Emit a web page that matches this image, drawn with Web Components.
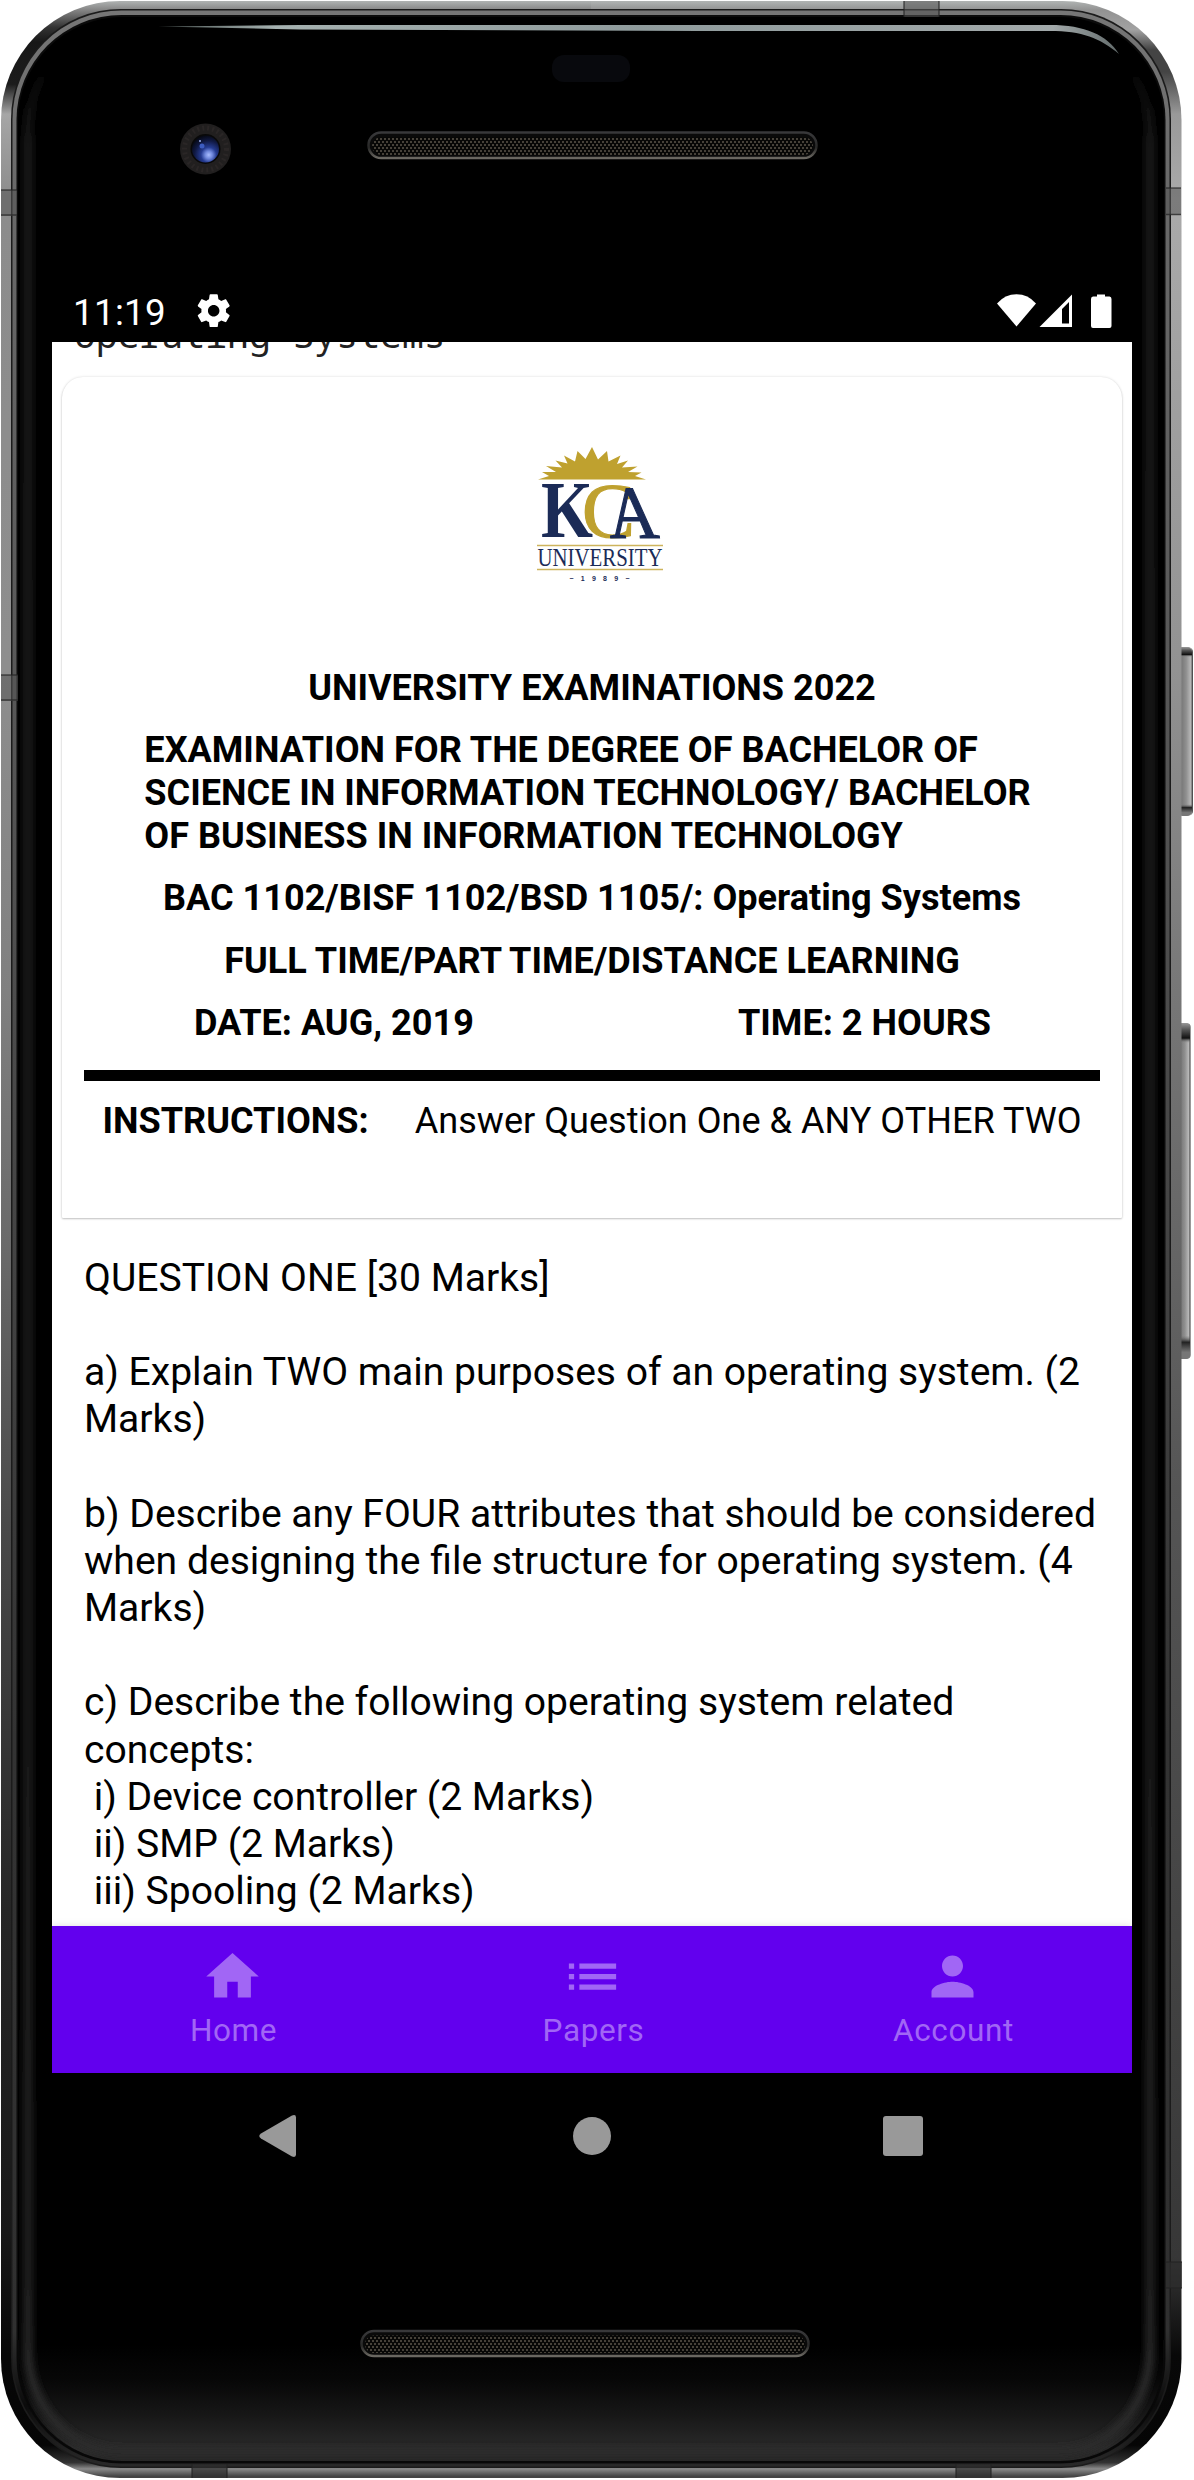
<!DOCTYPE html>
<html lang="en">
<head>
<meta charset="utf-8">
<title>Operating Systems</title>
<style>
html,body{margin:0;padding:0;background:#fff}
body{width:1194px;height:2480px;overflow:hidden}
</style>
</head>
<body>
<phone-frame>
  <status-bar time="11:19"></status-bar>
  <app-screen>
    <app-title>Operating Systems</app-title>
    <exam-card></exam-card>
    <question-sheet>QUESTION ONE [30 Marks]

a) Explain TWO main purposes of an operating system. (2
Marks)

b) Describe any FOUR attributes that should be considered
when designing the file structure for operating system. (4
Marks)

c) Describe the following operating system related
concepts:
 i) Device controller (2 Marks)
 ii) SMP (2 Marks)
 iii) Spooling (2 Marks)</question-sheet>
    <tab-bar slot="tabs">
      <tab-item icon="home">Home</tab-item>
      <tab-item icon="list">Papers</tab-item>
      <tab-item icon="person">Account</tab-item>
    </tab-bar>
  </app-screen>
  <system-nav></system-nav>
</phone-frame>
<script>
const define = (name, render) => customElements.define(name, class extends HTMLElement {
  connectedCallback() {
    if (!this.shadowRoot) this.attachShadow({ mode: 'open' }).innerHTML = render(this);
  }
});

define('phone-frame', () => `
<style>
:host{display:block;position:relative;width:1194px;height:2480px;font-family:Roboto,sans-serif}
.body{position:absolute;inset:0}
.display{position:relative;display:flex;flex-direction:column;width:1080px;padding:279px 0 0 52px}
</style>
<svg class="body" width="1194" height="2480" viewBox="0 0 1194 2480">
  <defs>
    <linearGradient id="l" gradientUnits="userSpaceOnUse" x1="0" y1="0" x2="0" y2="2480">
      <stop offset="0" stop-color="#b4b8b7"/><stop offset=".004" stop-color="#858585"/><stop offset=".011" stop-color="#333"/><stop offset=".017" stop-color="#171717"/><stop offset=".034" stop-color="#1c1c1c"/><stop offset=".046" stop-color="#a6a6a6"/><stop offset=".08" stop-color="#8c8c8c"/><stop offset=".27" stop-color="#8e8e8e"/><stop offset=".4" stop-color="#808080"/><stop offset=".5" stop-color="#6a6a6a"/><stop offset=".62" stop-color="#484848"/><stop offset=".77" stop-color="#262626"/><stop offset=".9" stop-color="#181818"/><stop offset=".95" stop-color="#070707"/><stop offset=".986" stop-color="#050505"/><stop offset=".993" stop-color="#333"/><stop offset=".9955" stop-color="#8b8b8b"/><stop offset=".9985" stop-color="#444"/>
    </linearGradient>
    <linearGradient id="r" gradientUnits="userSpaceOnUse" x1="0" y1="0" x2="0" y2="2480">
      <stop offset="0" stop-color="#b4b8b7"/><stop offset=".004" stop-color="#929292"/><stop offset=".012" stop-color="#a2a2a2"/><stop offset=".02" stop-color="#444"/><stop offset=".029" stop-color="#444"/><stop offset=".046" stop-color="#999"/><stop offset=".08" stop-color="#aaa"/><stop offset=".27" stop-color="#929292"/><stop offset=".4" stop-color="#777"/><stop offset=".6" stop-color="#555"/><stop offset=".77" stop-color="#454545"/><stop offset=".91" stop-color="#373737"/><stop offset=".95" stop-color="#080808"/><stop offset=".986" stop-color="#050505"/><stop offset=".993" stop-color="#333"/><stop offset=".9955" stop-color="#8b8b8b"/><stop offset=".9985" stop-color="#444"/>
    </linearGradient>
    <linearGradient id="rim" gradientUnits="userSpaceOnUse" x1="0" y1="0" x2="0" y2="2480">
      <stop offset="0" stop-color="#777"/><stop offset=".07" stop-color="#6a6a6a"/><stop offset=".4" stop-color="#4c4c4c"/><stop offset=".7" stop-color="#333"/><stop offset=".94" stop-color="#303030"/><stop offset=".97" stop-color="#0b0b0b"/><stop offset="1" stop-color="#303030"/>
    </linearGradient>
    <linearGradient id="side" gradientUnits="userSpaceOnUse" x1="0" y1="0" x2="0" y2="2480"><stop offset=".025" stop-color="#1c1c1c" stop-opacity="0"/><stop offset=".06" stop-color="#1c1c1c"/><stop offset=".9" stop-color="#202020"/><stop offset=".96" stop-color="#2b2b2b"/></linearGradient>
    <linearGradient id="chin" x2="0" y2="1"><stop offset="0" stop-color="#000"/><stop offset=".3" stop-color="#070707"/><stop offset=".6" stop-color="#171717"/><stop offset=".88" stop-color="#2a2a2a"/><stop offset="1" stop-color="#262626"/></linearGradient>
    <linearGradient id="shine" gradientUnits="userSpaceOnUse" x1="160" y1="0" x2="1120" y2="0"><stop offset="0" stop-color="#4a5452"/><stop offset=".12" stop-color="#a5b1b0"/><stop offset=".5" stop-color="#8f9b9c"/><stop offset=".93" stop-color="#a2a9aa"/><stop offset="1" stop-color="#626b6b"/></linearGradient>
    <linearGradient id="btn"><stop offset="0" stop-color="#666"/><stop offset=".55" stop-color="#909090"/><stop offset=".85" stop-color="#b8b8b8"/><stop offset="1" stop-color="#333"/></linearGradient>
    <linearGradient id="cap" x2="0" y2="1"><stop offset="0" stop-color="#999"/><stop offset=".02" stop-color="#555"/><stop offset=".045" stop-color="#111"/><stop offset=".06" stop-color="#999" stop-opacity="0"/><stop offset=".93" stop-color="#777" stop-opacity="0"/><stop offset=".95" stop-color="#222"/><stop offset=".98" stop-color="#777"/></linearGradient>
    <linearGradient id="edge" x2="0" y2="1"><stop offset="0" stop-color="#38383a"/><stop offset=".6" stop-color="#292928"/><stop offset="1" stop-color="#6b6862"/></linearGradient>
    <pattern id="mesh" width="4" height="6" patternUnits="userSpaceOnUse"><rect width="4" height="6" fill="#070706"/><rect x="0" y="0" width="2" height="2" fill="#464139"/><rect x="2" y="3" width="2" height="2" fill="#464139"/></pattern>
    <radialGradient id="lens" cx=".62" cy=".72" r=".75"><stop offset="0" stop-color="#a9bdff"/><stop offset=".18" stop-color="#7189dd"/><stop offset=".38" stop-color="#253b91"/><stop offset=".7" stop-color="#101943"/><stop offset="1" stop-color="#05070f"/></radialGradient>
    <filter id="soft" filterUnits="userSpaceOnUse" x="0" y="0" width="1194" height="2480"><feGaussianBlur stdDeviation="3.500"/></filter>
    <clipPath id="glass"><rect x="18" y="17" width="1146" height="2445" rx="104"/></clipPath>
    <clipPath id="lh"><rect width="591" height="2480"/></clipPath>
    <clipPath id="rh"><rect x="591" width="603" height="2480"/></clipPath>
  </defs>
  <g><rect x="1178" y="647" width="15" height="169" rx="5" fill="url(#btn)"/><rect x="1178" y="647" width="14" height="169" rx="5" fill="url(#cap)"/></g>
  <g><rect x="1178" y="1023" width="12.500" height="336" rx="4" fill="url(#btn)"/><rect x="1178" y="1023" width="12" height="336" rx="4" fill="url(#cap)"/></g>
  <rect x="1" y="1" width="1180.500" height="2477" rx="119" fill="url(#l)" clip-path="url(#lh)"/>
  <rect x="1" y="1" width="1180.500" height="2477" rx="119" fill="url(#r)" clip-path="url(#rh)"/>
  <rect x="11" y="9" width="1160" height="2459" rx="110" fill="#1b1b1b"/>
  <rect x="12.500" y="10.500" width="1157" height="2456" rx="109" fill="url(#rim)"/>
  <rect x="16.500" y="15" width="1149" height="2448.500" rx="105" fill="#0b0b0b"/>
  <rect x="18" y="17" width="1146" height="2445" rx="104" fill="#000"/>
  <g clip-path="url(#glass)">
    <rect x="0" y="2345" width="1194" height="117" fill="url(#chin)"/>
    <path d="M110 34A82 98 0 0 0 28 132V2350A94 102 0 0 0 122 2452H1058A92 102 0 0 0 1150 2350V132A90 98 0 0 0 1060 34" fill="none" stroke="url(#side)" stroke-width="9" filter="url(#soft)"/>
  </g>
  <path d="M18 2340V2358A104 104 0 0 0 122 2462H1060A104 104 0 0 0 1164 2358V2340" fill="none" stroke="#080808" stroke-width="2"/>
  <g fill="#555" fill-opacity=".55"><rect x="1" y="190" width="16" height="26"/><rect x="1" y="675" width="17" height="26"/><rect x="1166" y="188" width="15" height="27"/><rect x="904" y="1" width="35" height="16"/></g>
  <g fill="#2d2d2d" fill-opacity=".7"><rect x="1166" y="2262" width="16" height="26"/><rect x="192" y="2465" width="35" height="13"/><rect x="956" y="2465" width="35" height="13"/></g>
  <path d="M1 190h16M1 215h16M1 675h17M1 700h17M1166 188h15M1166 214.500h15M904 1v16M939 1v16M1166 2262h16M1166 2288h16M192 2464v14M227 2464v14M956 2464v14M991 2464v14" stroke="#222" stroke-opacity=".7" stroke-width="1.500"/>
  <path d="M158 26.500L300 25H1050C1085 25 1107 35 1119 54C1100 38 1082 31 1050 31H700L300 29.500Z" fill="url(#shine)"/>
  <rect x="552" y="55" width="78" height="27" rx="12" fill="#08090d"/>
  <circle cx="205.500" cy="149" r="25.500" fill="#211f1f"/>
  <circle cx="205.500" cy="149" r="21" fill="none" stroke="#2a2626" stroke-width="5" stroke-dasharray="2 3"/>
  <circle cx="205.500" cy="149" r="15" fill="#090909"/>
  <circle cx="205.500" cy="149" r="13.500" fill="url(#lens)"/>
  <circle cx="202" cy="146" r="2.500" fill="#3d5cc0"/><circle cx="200" cy="141" r="1" fill="#9db0ee"/>
  <rect x="368.500" y="132.500" width="448" height="25.500" rx="12.700" fill="#0a0a0a" stroke="url(#edge)" stroke-width="2.500"/>
  <rect x="372" y="137" width="441" height="18" rx="9" fill="url(#mesh)"/>
  <rect x="361.500" y="2331" width="447" height="25" rx="12.500" fill="#0a0a0a" stroke="url(#edge)" stroke-width="2.500"/>
  <rect x="365" y="2335.500" width="440" height="17.500" rx="8.700" fill="url(#mesh)"/>
</svg>
<div class="display"><slot></slot></div>`);

define('status-bar', el => `
<style>
:host{display:flex;align-items:center;box-sizing:border-box;width:1080px;height:63px;padding:0 20px 0 21px;background:#000;color:#fff}
time{font-size:36.75px;line-height:43px;letter-spacing:.3px;padding-top:3px}
.gear{margin-left:27.500px}
.right{display:flex;align-items:center;margin-left:auto}
svg{display:block;fill:#fff}
</style>
<time>${el.getAttribute('time')}</time>
<svg class="gear" width="39.400" height="39.400" viewBox="0 0 24 24"><path d="M19.430 12.980c.04-.32.07-.64.07-.98s-.03-.66-.07-.98l2.110-1.650c.19-.15.24-.42.12-.64l-2-3.460c-.12-.22-.39-.3-.61-.22l-2.490 1c-.52-.4-1.080-.73-1.690-.98l-.38-2.650C14.460 2.180 14.250 2 14 2h-4c-.25 0-.46.18-.49.42l-.38 2.650c-.61.25-1.170.59-1.690.98l-2.490-1c-.23-.09-.49 0-.61.22l-2 3.460c-.13.22-.07.49.12.64l2.110 1.650c-.04.32-.07.65-.07.98s.03.66.07.98l-2.110 1.650c-.19.15-.24.42-.12.64l2 3.460c.12.22.39.3.61.22l2.490-1c.52.4 1.080.73 1.690.98l.38 2.650c.03.24.24.42.49.42h4c.25 0 .46-.18.49-.42l.38-2.650c.61-.25 1.170-.59 1.690-.98l2.490 1c.23.09.49 0 .61-.22l2-3.460c.12-.22.07-.49-.12-.64l-2.110-1.650zM12 15.500c-1.930 0-3.500-1.570-3.500-3.500s1.570-3.500 3.500-3.500 3.500 1.570 3.500 3.500-1.570 3.500-3.500 3.500z"/></svg>
<div class="right">
<svg width="116" height="36" viewBox="996 292 116 36"><path d="M1016.500 325.500L997 302.500Q1005 293.300 1016.500 293.300T1036 302.500Z"/><path fill-rule="evenodd" d="M1039.500 326L1072 293.500V326ZM1062 308V322.500H1069V301Z"/><path d="M1097 295.500V293.500H1105V295.500H1109.500Q1111.500 295.500 1111.500 298V325Q1111.500 327 1109.500 327H1093Q1091 327 1091 325V298Q1091 295.500 1093 295.500Z"/></svg>
</div>`);

define('app-screen', () => `
<style>
:host{display:flex;flex-direction:column;width:1080px;height:1731px;background:#fff;overflow:hidden}
main{flex:1;min-height:0;overflow:hidden;display:flex;flex-direction:column}
</style>
<main><slot></slot></main><slot name="tabs"></slot>`);

define('app-title', () => `
<style>
:host{display:block;flex:none;margin:-29px 0 20.500px 22px;height:43px;white-space:nowrap;font:36.450px/43px "Noto Sans Mono","Roboto Mono",monospace;color:#222}
</style><slot></slot>`);

define('uni-logo', () => `
<style>:host{display:block;width:128px;height:138px;font-weight:400}svg{display:block;overflow:visible}</style>
<svg width="128" height="138" viewBox="536 446 128 138">
  <path fill="#bfa12f" d="M538 479.500L549 476L542 472L556 472L546 466L562 467.500L555.500 460.500L567.500 463.500L564 455.500L575 461.500L577.500 451L585.500 459L592 447L598 459.500L607 451L608.500 461.500L620.500 455.500L617 464L628 460.500L622 467.500L637.500 466.500L628 472L641.500 472.500L635 476L646 479.500Z"/>
  <g font-family="Liberation Serif,serif">
    <text x="541" y="537" font-size="80" font-weight="bold" fill="#1b2b57" textLength="52" lengthAdjust="spacingAndGlyphs">K</text>
    <text x="582" y="536.500" font-size="78" fill="#bfa12f" stroke="#bfa12f" stroke-width="1.200" textLength="53" lengthAdjust="spacingAndGlyphs">C</text>
    <text x="0" y="0" transform="translate(610 538) skewX(6)" font-size="75" fill="#1b2b57" stroke="#1b2b57" stroke-width="1.200" textLength="50" lengthAdjust="spacingAndGlyphs">A</text>
    <text x="537.500" y="565.500" font-size="24.500" fill="#1b2b57" textLength="125" lengthAdjust="spacingAndGlyphs">UNIVERSITY</text>
  </g>
  <path d="M537 545.500H663M537 569.500H663" stroke="#cdb45c" stroke-width="1.600"/>
  <text x="569.500" y="581" font-family="Liberation Sans,sans-serif" font-weight="bold" font-size="7" fill="#1b2b57" textLength="60">~1989~</text>
</svg>`);

define('exam-card', () => `
<style>
:host{display:flex;flex-direction:column;align-items:center;flex:none;box-sizing:border-box;width:1060px;height:841px;margin-left:10px;padding-top:69.500px;border-radius:21px 21px 1px 1px;box-shadow:0 1px 2px #0003,0 0 3px #0000001f;background:#fff;color:#000;font-weight:700;font-size:36.080px;line-height:43px;white-space:nowrap}
uni-logo{margin:0 0 83px 16px}
p{margin:0 0 19.200px}
.degree{white-space:pre;margin-right:9px}
.when{display:flex;justify-content:space-between;width:797px;margin-bottom:25.400px;margin-left:1px}
hr{width:1016px;height:11px;margin:0 0 19px;border:0;background:#000}
.how{display:flex;justify-content:space-between;width:979px;margin:0}
.how .note{font-weight:400}
</style>
<uni-logo></uni-logo>
<p>UNIVERSITY EXAMINATIONS 2022</p>
<p class="degree">EXAMINATION FOR THE DEGREE OF BACHELOR OF
SCIENCE IN INFORMATION TECHNOLOGY/ BACHELOR
OF BUSINESS IN INFORMATION TECHNOLOGY</p>
<p>BAC 1102/BISF 1102/BSD 1105/: Operating Systems</p>
<p>FULL TIME/PART TIME/DISTANCE LEARNING</p>
<div class="when"><span>DATE: AUG, 2019</span><span>TIME: 2 HOURS</span></div>
<hr>
<div class="how"><span>INSTRUCTIONS:</span><span class="note">Answer Question One &amp; ANY OTHER TWO</span></div>`);

define('question-sheet', () => `
<style>
:host{display:block;flex:none;margin:37px 0 0 32px;font-size:39.100px;line-height:47.200px;color:#000}
div{white-space:pre}
</style><div><slot></slot></div>`);

define('tab-bar', () => `
<style>
:host{display:flex;flex:none;height:147px;background:#6200ee;box-shadow:0 0 8px #0002;position:relative}
</style><slot></slot>`);

const ICONS = {
  home: 'M10 20v-6h4v6h5v-8h3L12 3 2 12h3v8z',
  list: 'M3 13h2v-2H3v2zm0 4h2v-2H3v2zm0-8h2V7H3v2zm4 4h14v-2H7v2zm0 4h14v-2H7v2zM7 7v2h14V7H7z',
  person: 'M12 12c2.210 0 4-1.790 4-4s-1.790-4-4-4-4 1.790-4 4 1.790 4 4 4zm0 2c-2.670 0-8 1.340-8 4v2h16v-2c0-2.660-5.330-4-8-4z'
};
define('tab-item', el => `
<style>
:host{display:flex;flex:1;flex-direction:column;align-items:center;padding-top:19px;gap:3.500px;color:#a166f5;font-size:31.500px;line-height:37px;letter-spacing:.6px}
svg{display:block;fill:currentColor}
span{margin-left:3px}
</style>
<svg width="63" height="63" viewBox="0 0 24 24"><path d="${ICONS[el.getAttribute('icon')]}"/></svg>
<span><slot></slot></span>`);

define('system-nav', () => `
<style>
:host{display:flex;align-items:center;justify-content:space-between;box-sizing:border-box;width:1080px;height:126px;padding:0 209px 0 206px}
svg{display:block;fill:#999}
.home{margin-left:3px}
</style>
<svg width="39" height="44" viewBox="258 2114 39 44"><path d="M261 2133.500L292 2115.500Q296 2114 296 2117.500V2154.500Q296 2158 292 2156.500L261 2138.500Q257.500 2136 261 2133.500Z"/></svg>
<svg class="home" width="38" height="38" viewBox="0 0 38 38"><circle cx="19" cy="19" r="19"/></svg>
<svg width="40" height="40" viewBox="0 0 40 40"><rect width="40" height="40" rx="3"/></svg>`);
</script>
</body>
</html>
